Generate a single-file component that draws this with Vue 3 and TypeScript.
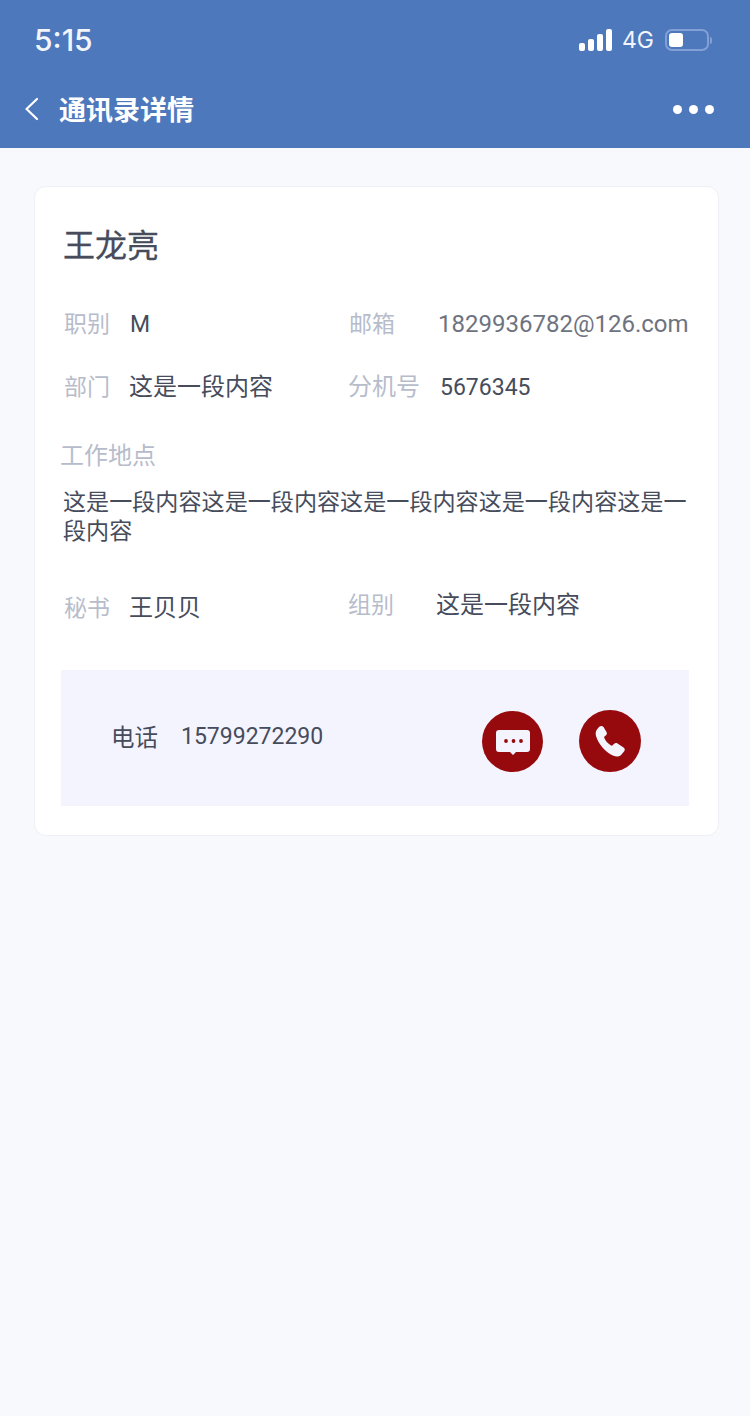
<template>
  <div class="page">
    <header class="head">
      <div class="status">
        <span class="time">5:15</span>
        <div class="status-right">
          <div class="signal">
            <i v-for="h in signalBars" :key="h" :style="{ height: h + 'px' }"></i>
          </div>
          <span class="net">4G</span>
          <div class="battery"><b></b></div>
          <span class="battery-cap"></span>
        </div>
      </div>
      <div class="nav">
        <svg class="back" width="15" height="24" viewBox="0 0 15 24">
          <path d="M13 2 L2.500 12 L13 22" fill="none" stroke="#fff" stroke-width="2.200" stroke-linecap="round" stroke-linejoin="round" />
        </svg>
        <span class="title">通讯录详情</span>
        <div class="dots"><i></i><i></i><i></i></div>
      </div>
    </header>

    <main class="card">
      <h1 class="name">王龙亮</h1>

      <div class="row row-1">
        <div class="cell"><span class="label w-66">职别</span><span class="value num">M</span></div>
        <div class="cell"><span class="label w-89">邮箱</span><span class="value email">1829936782@126.com</span></div>
      </div>
      <div class="row row-2">
        <div class="cell"><span class="label w-65">部门</span><span class="value">这是一段内容</span></div>
        <div class="cell"><span class="label label-lg w-92 pull">分机号</span><span class="value num">5676345</span></div>
      </div>

      <div class="place-label">工作地点</div>
      <p class="place">这是一段内容这是一段内容这是一段内容这是一段内容这是一段内容</p>

      <div class="row row-3">
        <div class="cell"><span class="label w-65">秘书</span><span class="value">王贝贝</span></div>
        <div class="cell up"><span class="label w-88 pull">组别</span><span class="value">这是一段内容</span></div>
      </div>

      <div class="phone">
        <span class="phone-label">电话</span>
        <span class="phone-num num">15799272290</span>
        <button class="round msg" type="button" aria-label="message">
          <svg class="msg-icon" width="34" height="26" viewBox="0 0 34 26">
            <path d="M3 0h28a3 3 0 0 1 3 3v16a3 3 0 0 1-3 3H20l-3 3-3-3H3a3 3 0 0 1-3-3V3a3 3 0 0 1 3-3z" fill="#f4f4fe" />
            <circle cx="10" cy="11" r="1.900" fill="#960a0e" />
            <circle cx="17.500" cy="11" r="1.900" fill="#960a0e" />
            <circle cx="25" cy="11" r="1.900" fill="#960a0e" />
          </svg>
        </button>
        <button class="round call" type="button" aria-label="call">
          <svg width="34" height="34" viewBox="0 0 34 34">
            <path d="M6 3 C7.500 1.500 9.500 1.500 10.500 3 L13.500 8 C14.200 9.200 14 10.300 13 11.200 L11 13 C12 16.500 15.500 20.500 19 21.800 L21.200 19.800 C22.200 18.900 23.300 18.800 24.500 19.500 L30.500 23.500 C32 24.500 32.200 26.200 31 27.500 L28.500 30.500 C26.500 32.800 23.500 33 20.500 31.800 C12 28 5.500 20 3 12 C2 8.500 3 6 6 3 Z" fill="#f4f4fe" />
          </svg>
        </button>
      </div>
    </main>
  </div>
</template>

<script setup lang="ts">
const signalBars: number[] = [8, 12, 17, 22];
</script>

<style>
html, body {
  margin: 0;
  background: #f8f9fd;
}
</style>

<style scoped>
.page {
  min-height: 1416px;
  background: #f8f9fd;
  font-family: "Noto Sans CJK SC", sans-serif;
  color: #464c5b;
  font-size: 24px;
  overflow: hidden;
}

.head {
  height: 148px;
  background: #4e78bc;
  color: #fff;
}

.status {
  height: 80px;
  display: flex;
  align-items: center;
  justify-content: space-between;
  padding: 0 38px 0 34px;
}

.time {
  font-family: "Inter", sans-serif;
  font-size: 30px;
  font-weight: 500;
  color: #f2f5fa;
}

.status-right {
  display: flex;
  align-items: center;
}

.signal {
  display: flex;
  align-items: flex-end;
  gap: 3px;
  height: 22px;
}

.signal i {
  width: 6px;
  background: #fff;
  border-radius: 2px;
}

.net {
  font-family: "Inter", sans-serif;
  font-size: 23px;
  color: #f2f5fa;
  margin: 0 11px 0 10px;
}

.battery {
  width: 44px;
  height: 22px;
  box-sizing: border-box;
  border: 2px solid #82a0d8;
  border-radius: 7px;
  padding: 2px;
}

.battery b {
  display: block;
  width: 14px;
  height: 14px;
  background: #fff;
  border-radius: 3px;
}

.battery-cap {
  width: 2px;
  height: 7px;
  background: #82a0d8;
  border-radius: 0 2px 2px 0;
  margin-left: 1px;
}

.nav {
  height: 68px;
  display: flex;
  align-items: center;
  padding: 0 36px 10px 24px;
  box-sizing: border-box;
}

.back {
  margin-right: 20px;
}

.title {
  font-size: 27px;
  font-weight: 700;
  margin-bottom: 2px;
}

.dots {
  margin-left: auto;
  display: flex;
  gap: 7px;
}

.dots i {
  width: 9px;
  height: 9px;
  border-radius: 50%;
  background: #fff;
}

.card {
  margin: 38px 31px 0 34px;
  height: 650px;
  box-sizing: border-box;
  background: #fff;
  border: 1px solid #eef0f5;
  border-radius: 12px;
  padding: 0 29px 0 26px;
}

.name {
  margin: 0;
  padding: 36px 0 0 2px;
  font-size: 32px;
  line-height: 40px;
  font-weight: 400;
  -webkit-text-stroke: 0.3px #464c5b;
}

.row {
  display: flex;
  line-height: 32px;
  padding-left: 3px;
}

.row-1 { margin-top: 43px; }
.row-2 { margin-top: 28px; }
.row-3 { margin-top: 46px; }

.cell {
  display: flex;
  align-items: baseline;
  width: 285px;
}

.up {
  position: relative;
  top: -3px;
}

.label {
  color: #b7bccb;
  flex: none;
  font-size: 23px;
}

.label-lg {
  font-size: 24px;
}

.pull {
  margin-left: -1px;
}

.w-66 { width: 66px; }
.w-65 { width: 65px; }
.w-88 { width: 88px; }
.w-89 { width: 89px; }
.w-92 { width: 92px; }

.value {
  white-space: nowrap;
}

.num {
  font-family: "Roboto", sans-serif;
  font-size: 23px;
}

.email {
  font-family: "Roboto", sans-serif;
  color: #6e7380;
}

.place-label {
  margin-top: 34px;
  margin-left: -1px;
  color: #b7bccb;
  line-height: 32px;
}

.place {
  margin: 16px 0 0 2px;
  font-size: 23.100px;
  line-height: 29px;
}

.phone {
  height: 136px;
  margin-top: 48px;
  background: #f4f4fe;
  display: flex;
  align-items: center;
  padding-left: 50px;
  font-size: 23.500px;
}

.phone-label {
  width: 70px;
  margin-bottom: 4px;
}

.phone-num {
  flex: 1;
  margin-bottom: 4px;
}

.round {
  border: 0;
  padding: 0;
  border-radius: 50%;
  background: #960a0e;
  display: flex;
  align-items: center;
  justify-content: center;
  cursor: pointer;
}

.msg {
  width: 61px;
  height: 61px;
  margin: 6px 36px 0 0;
}

.msg-icon {
  margin-top: 3px;
}

.call {
  width: 62px;
  height: 62px;
  margin: 5px 48px 0 0;
}
</style>
